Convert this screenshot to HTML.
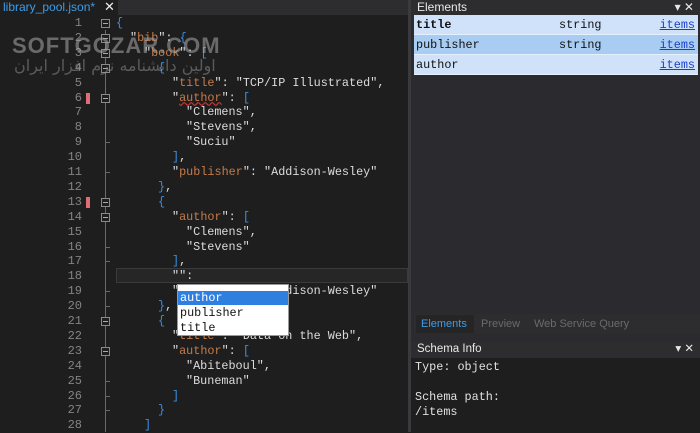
<!DOCTYPE html>
<html><head><meta charset="utf-8"><style>
*{margin:0;padding:0;box-sizing:border-box}
body{width:700px;height:432px;overflow:hidden;background:#1e1e1e;font-family:"Liberation Sans",sans-serif;position:relative}
.mono{font-family:"Liberation Mono",monospace;font-size:11.8px}
#tabbar{position:absolute;left:0;top:0;width:408px;height:15px;background:#2d2d30}
#tab{position:absolute;left:0;top:0;width:118px;height:15px;background:#1e1e1e;color:#3d9de8;font-size:12px;padding-left:3px;line-height:14px}
#tab span{position:absolute;left:104px;top:0;color:#eee;font-size:13px}
#ed{position:absolute;left:0;top:15px;width:408px;height:417px;background:#1e1e1e}
.ln{position:absolute;left:40px;width:42px;text-align:right;color:#848484;font-size:12px;line-height:15px;font-family:"Liberation Mono",monospace}
.cl{position:absolute;white-space:pre;color:#dcdcdc;line-height:15px}
.k{color:#c57b4a}.b{color:#3a8ee0}
.mk{position:absolute;left:86px;width:4px;height:11px;background:#e06c75}
.fold{position:absolute;left:101px;width:9px;height:9px;border:1px solid #8a8a8a;}
.fold:after{content:"";position:absolute;left:1px;top:3px;width:5px;height:1px;background:#aaa}
.vl{position:absolute;left:105px;width:1px;background:#6a6a6a}
.tk{position:absolute;left:105px;width:5px;height:1px;background:#6a6a6a}
#rp{position:absolute;left:408px;top:0;width:292px;height:432px;background:#2b2b2f;border-left:3px solid #3a3a3e}
.hdr{position:absolute;left:0;width:289px;height:15px;background:#2d2d30;color:#e8e8e8;font-size:12px;padding-left:6px;line-height:14px}
.row{position:absolute;left:3px;width:284px;height:20px;background:#cfe2f9;color:#111;line-height:20px;border-bottom:1px solid #e6f0fc}
.row .a{position:absolute;left:2px}.row .s{position:absolute;left:145px}.row .i{position:absolute;right:3px;color:#1b3fc9;text-decoration:underline}
</style></head><body>
<div id="tabbar"><div id="tab">library_pool.json*<span>✕</span></div></div>
<div id="ed">
<div style="position:absolute;left:116px;top:253px;width:292px;height:15px;background:#262626;border:1px solid #3a3a3a"></div>
</div>
<div id="lines"></div>
<div style="position:absolute;left:12px;top:33px;font-size:22px;font-weight:bold;color:rgba(170,170,170,.55);letter-spacing:1px">SOFTGOZAR.COM</div>
<div style="position:absolute;left:14px;top:56px;font-size:16px;color:rgba(150,150,150,.5);font-family:'DejaVu Sans',sans-serif">اولین دانشنامه نرم افزار ایران</div>
<div id="pop" style="position:absolute;left:177px;top:284px;width:112px;height:52px;background:#fff;border:1px solid #999">
<div class="mono" style="position:absolute;left:0;top:6px;width:110px;height:14px;background:#2f7fe0;color:#fff;padding-left:2px;line-height:14px">author</div>
<div class="mono" style="position:absolute;left:2px;top:21px;color:#111;line-height:14px">publisher</div>
<div class="mono" style="position:absolute;left:2px;top:36px;color:#111;line-height:14px">title</div>
</div>
<div id="rp">
<div class="hdr" style="top:0">Elements<span style="position:absolute;right:6px;top:0">▾ ✕</span></div>
<div class="row mono" style="top:15px"><span class="a" style="font-weight:bold">title</span><span class="s">string</span><span class="i">items</span></div>
<div class="row mono" style="top:35px;background:#a9ccf3"><span class="a">publisher</span><span class="s">string</span><span class="i">items</span></div>
<div class="row mono" style="top:55px"><span class="a">author</span><span class="i">items</span></div>
<div style="position:absolute;left:3px;top:314px;width:286px;height:20px;background:#2d2d30"></div>
<div style="position:absolute;left:5px;top:315px;width:58px;height:18px;background:#252526;color:#3d9de8;font-size:11px;line-height:18px;padding-left:5px">Elements</div>
<div style="position:absolute;left:70px;top:315px;color:#6a6a6a;font-size:11px;line-height:18px">Preview</div>
<div style="position:absolute;left:123px;top:315px;color:#6a6a6a;font-size:11px;line-height:18px">Web Service Query</div>
<div class="hdr" style="top:342px;background:#2d2d30;font-size:11.5px">Schema Info<span style="position:absolute;right:6px;top:0">▾ ✕</span></div>
<div style="position:absolute;left:0;top:358px;width:289px;height:74px;background:#1e1e1e"></div>
<div class="mono" style="position:absolute;left:4px;top:360px;color:#e0e0e0;line-height:15px;white-space:pre">Type: object

Schema path:
/items</div>
</div>
<script>
var L=[
[0,'<span class="b">{</span>'],
[1,'"<span class="k">bib</span>": <span class="b">{</span>'],
[2,'"<span class="k">book</span>": <span class="b">[</span>'],
[3,'<span class="b">{</span>'],
[4,'"<span class="k">title</span>": "TCP/IP Illustrated",'],
[4,'"<span class="k" style="text-decoration:underline wavy #c33">author</span>": <span class="b">[</span>'],
[5,'"Clemens",'],[5,'"Stevens",'],[5,'"Suciu"'],
[4,'<span class="b">]</span>,'],
[4,'"<span class="k">publisher</span>": "Addison-Wesley"'],
[3,'<span class="b">}</span>,'],
[3,'<span class="b">{</span>'],
[4,'"<span class="k">author</span>": <span class="b">[</span>'],
[5,'"Clemens",'],[5,'"Stevens"'],
[4,'<span class="b">]</span>,'],
[4,'"":'],
[4,'"<span class="k">publisher</span>": "Addison-Wesley"'],
[3,'<span class="b">}</span>,'],
[3,'<span class="b">{</span>'],
[4,'"<span class="k">title</span>": "Data on the Web",'],
[4,'"<span class="k">author</span>": <span class="b">[</span>'],
[5,'"Abiteboul",'],[5,'"Buneman"'],
[4,'<span class="b">]</span>'],
[3,'<span class="b">}</span>'],
[2,'<span class="b">]</span>']];
var h='',lh=14.9,t0=16;
for(var i=0;i<L.length;i++){var y=t0+i*lh;
h+='<div class="ln" style="top:'+y+'px">'+(i+1)+'</div>';
h+='<div class="cl mono" style="top:'+y+'px;left:'+(116+L[i][0]*14)+'px">'+L[i][1]+'</div>';}
h+='<div class="vl" style="top:30px;height:402px"></div>';
[1,2,3,4,6,13,14,21,23].forEach(function(n){h+='<div class="fold" style="top:'+(t0+(n-1)*lh+3)+'px;background:#1e1e1e"></div>'});
[9,11,16,17,19,20,25,26,27].forEach(function(n){h+='<div class="tk" style="top:'+(t0+(n-1)*lh+7)+'px"></div>'});
[6,13].forEach(function(n){h+='<div class="mk" style="top:'+(t0+(n-1)*lh+2)+'px"></div>'});
document.getElementById('lines').innerHTML=h;
</script>
</body></html>
